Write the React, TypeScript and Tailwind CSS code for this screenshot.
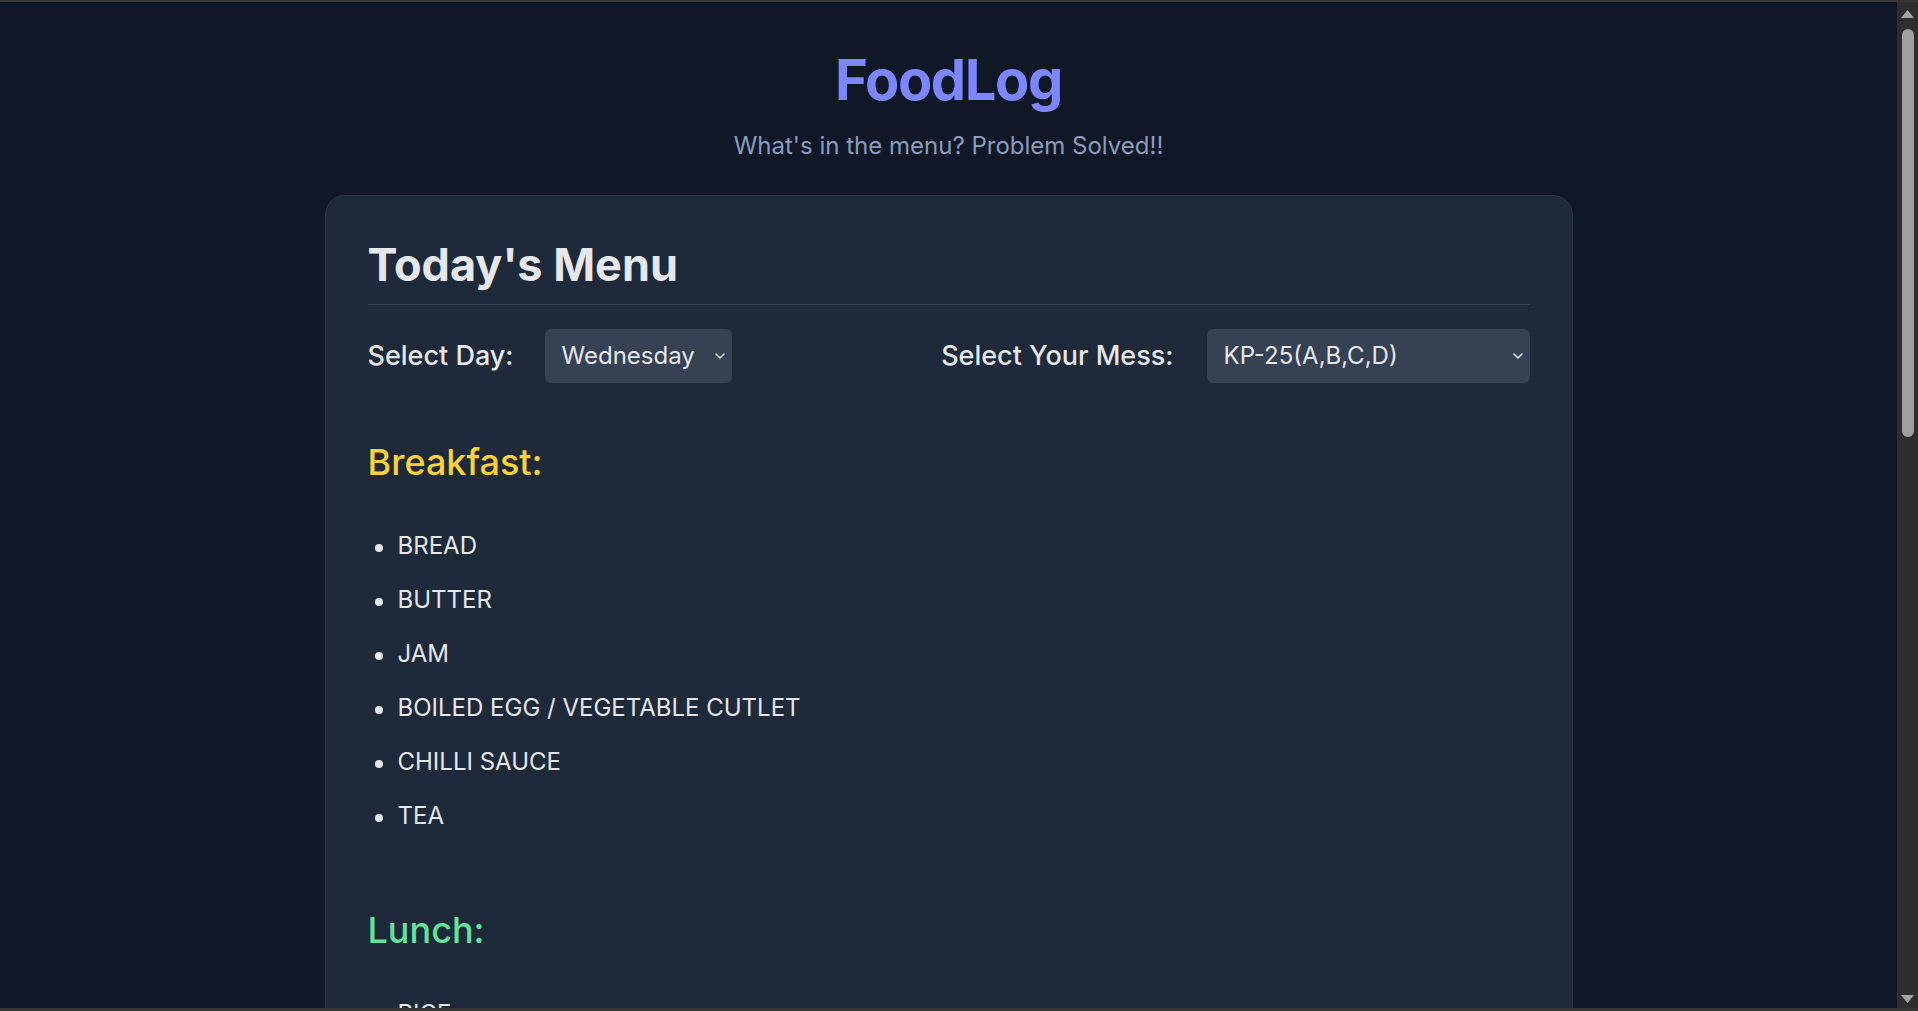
import { useState } from 'react';

type Section = { title: string; color: string; items: string[] };

const days = ['Monday', 'Tuesday', 'Wednesday', 'Thursday', 'Friday', 'Saturday', 'Sunday'];
const messes = ['KP-25(A,B,C,D)', 'KP-25(E,F)', 'KP-7', 'KP-10'];

const menu: Section[] = [
  {
    title: 'Breakfast:',
    color: 'text-[#fdd234]',
    items: ['BREAD', 'BUTTER', 'JAM', 'BOILED EGG / VEGETABLE CUTLET', 'CHILLI SAUCE', 'TEA'],
  },
  {
    title: 'Lunch:',
    color: 'text-[#62e39c]',
    items: ['RICE', 'ROTI', 'DAL FRY', 'ALOO BHINDI', 'SALAD', 'CURD'],
  },
  {
    title: 'Snacks:',
    color: 'text-[#f9a8d4]',
    items: ['SAMOSA', 'TOMATO SAUCE', 'TEA'],
  },
  {
    title: 'Dinner:',
    color: 'text-[#93c5fd]',
    items: ['RICE', 'ROTI', 'CHICKEN CURRY / PANEER MASALA', 'DAL', 'SALAD', 'SWEET'],
  },
];

function Chevron() {
  return (
    <svg
      width="12"
      height="8"
      viewBox="0 0 12 8"
      fill="none"
      className="pointer-events-none absolute right-[6px] top-1/2 -translate-y-1/2"
    >
      <path d="M2 2l4 4 4-4" stroke="#e5e7eb" strokeWidth="1.6" strokeLinecap="round" strokeLinejoin="round" />
    </svg>
  );
}

// window scrollbar look-alike (the headless view hides the native one)
function ScrollStrip() {
  return (
    <div className="flex w-[21px] shrink-0 flex-col items-center bg-[#2e2e2e] pt-[8px] pb-[5px]">
      <svg width="13" height="8" viewBox="0 0 13 8">
        <path d="M6.5 0L13 8H0z" fill="#a3a3a3" />
      </svg>
      <div className="mt-[11px] h-[408px] w-[12px] rounded-full bg-[#a0a0a0]" />
      <div className="flex-1" />
      <svg width="13" height="8" viewBox="0 0 13 8">
        <path d="M0 0h13L6.5 8z" fill="#a3a3a3" />
      </svg>
    </div>
  );
}

export default function App() {
  const [day, setDay] = useState('Wednesday');
  const [mess, setMess] = useState('KP-25(A,B,C,D)');

  return (
    <div className="flex h-screen border-t-2 border-b-[3px] border-[#363636] bg-[#101828] font-['Inter',sans-serif] text-[#e5e7eb]">
      <div className="min-w-0 flex-1 overflow-y-auto pb-[60px]">
        <header className="pt-[45px] text-center">
          <h1 className="text-[56px] font-bold leading-[67px] tracking-tight text-[#7c86ff]">FoodLog</h1>
          <p className="mt-[14px] text-[24px] leading-[36px] text-[#8a9cbd]">What's in the menu? Problem Solved!!</p>
        </header>

        <main className="mx-auto mt-[31px] w-[1248px] rounded-[20px] border border-[#2c3647] bg-[#1e2939] px-[42px] pt-[42px] pb-[48px]">
          <h2 className="border-b border-[#364153] pb-[12px] text-[45px] font-bold leading-[54px] text-[#e5e7eb]">
            Today's Menu
          </h2>

          {/* selectors */}
          <div className="mt-[24px] flex items-center justify-between">
            <div className="flex items-center gap-[31px]">
              <label className="text-[27px] font-medium text-[#e5e7eb]">Select Day:</label>
              <div className="relative">
                <select
                  value={day}
                  onChange={(e) => setDay(e.target.value)}
                  className="h-[54px] w-[187px] appearance-none rounded-[6px] bg-[#364153] pl-[17px] text-[24px] text-[#e5e7eb] outline-none"
                >
                  {days.map((d) => (
                    <option key={d}>{d}</option>
                  ))}
                </select>
                <Chevron />
              </div>
            </div>

            <div className="flex items-center gap-[33px]">
              <label className="text-[27px] font-medium text-[#e5e7eb]">Select Your Mess:</label>
              <div className="relative">
                <select
                  value={mess}
                  onChange={(e) => setMess(e.target.value)}
                  className="h-[54px] w-[323px] appearance-none rounded-[6px] bg-[#364153] pl-[17px] text-[24px] text-[#e5e7eb] outline-none"
                >
                  {messes.map((m) => (
                    <option key={m}>{m}</option>
                  ))}
                </select>
                <Chevron />
              </div>
            </div>
          </div>

          {/* meals */}
          <div className="mt-[57px] flex flex-col gap-[74px]">
            {menu.map((section) => (
              <section key={section.title}>
                <h3 className={`text-[36px] font-medium leading-[45px] ${section.color}`}>{section.title}</h3>
                <ul className="mt-[43px] flex flex-col gap-[18px]">
                  {section.items.map((item, i) => (
                    <li key={i} className="flex items-center text-[24px] leading-[36px] text-[#e5e7eb]">
                      <span className="ml-[7px] mr-[15px] mt-[3px] h-[8px] w-[8px] shrink-0 rounded-full bg-[#e5e7eb]" />
                      {item}
                    </li>
                  ))}
                </ul>
              </section>
            ))}
          </div>
        </main>
      </div>
      <ScrollStrip />
    </div>
  );
}
